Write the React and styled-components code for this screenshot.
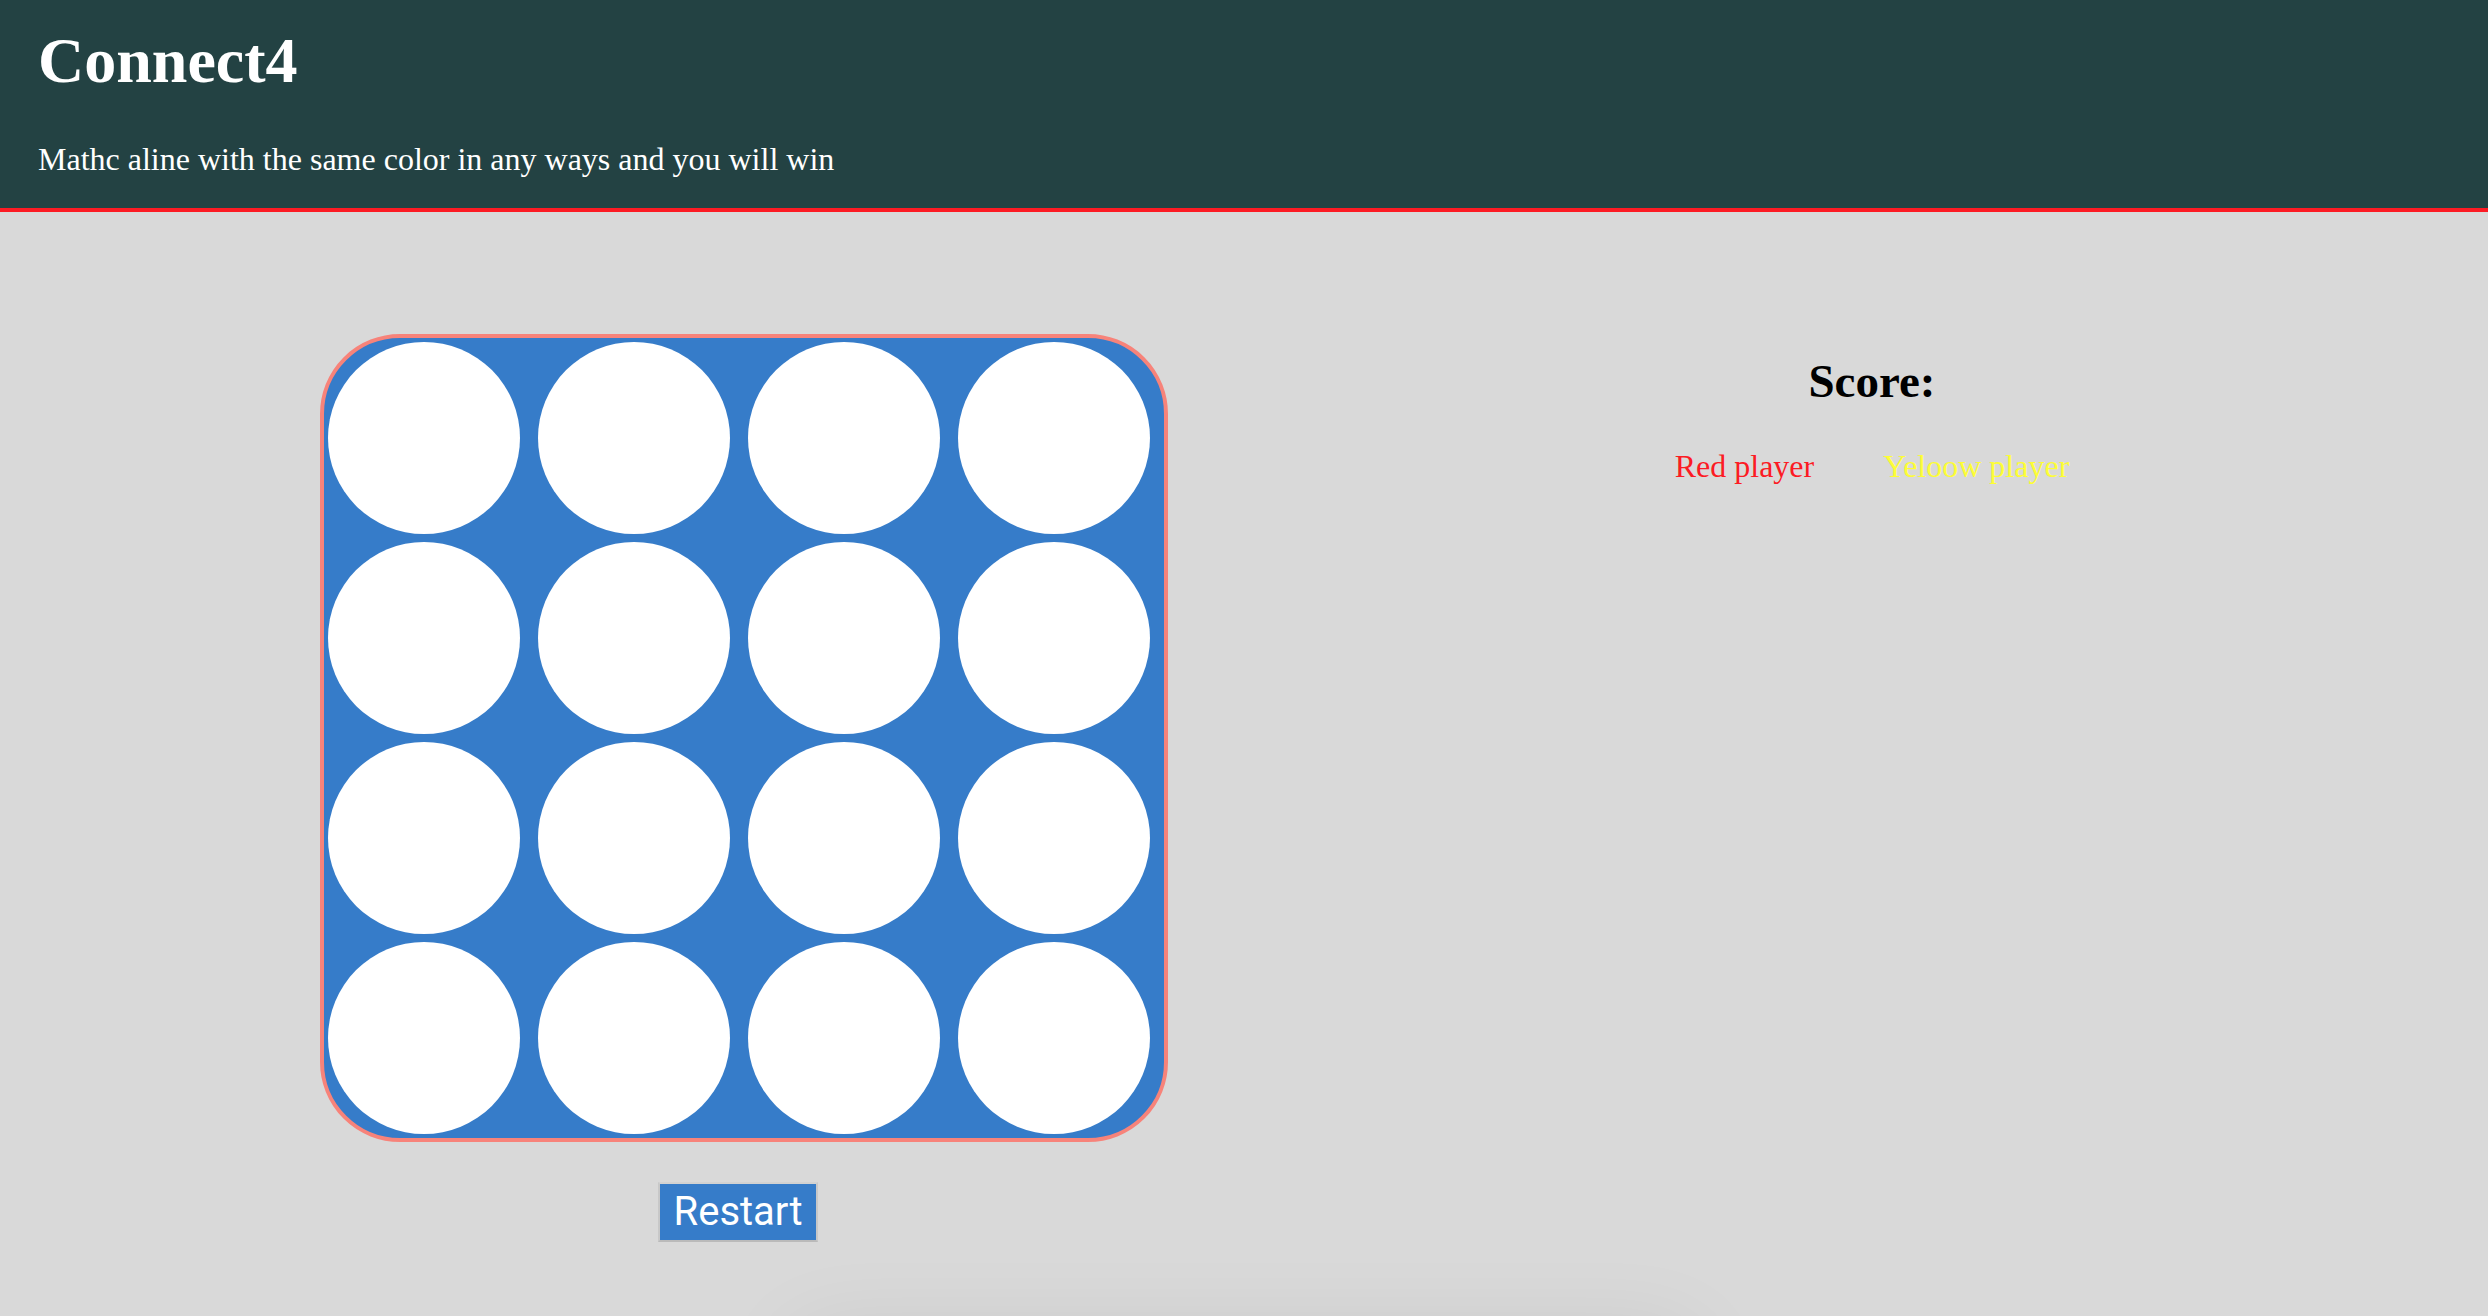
import React, { useState } from 'react';
import styled, { createGlobalStyle } from 'styled-components';

const GlobalStyle = createGlobalStyle`
    html, body {
        margin: 0;
        padding: 0;
        background: #d9d9d9;
        overflow: hidden;
    }
    body {
        font-family: "Liberation Serif", "Times New Roman", serif;
    }
`;

const SIZE = 4;
const emptyBoard = () => Array(SIZE * SIZE).fill(null);

const App = () => {
    const [cells, setCells] = useState(emptyBoard());
    const [turn, setTurn] = useState('red');

    // drop a piece in the clicked column
    const dropHandler = (index) => {
        const col = index % SIZE;
        for (let row = SIZE - 1; row >= 0; row--) {
            const i = row * SIZE + col;
            if (!cells[i]) {
                const next = [...cells];
                next[i] = turn;
                setCells(next);
                setTurn(turn === 'red' ? 'yellow' : 'red');
                return;
            }
        }
    };

    const restartHandler = () => {
        setCells(emptyBoard());
        setTurn('red');
    };

    return (
        <>
            <GlobalStyle />
            <Header>
                <Title>Connect4</Title>
                <Subtitle>Mathc aline with the same color in any ways and you will win</Subtitle>
            </Header>
            <Main>
                <GameColumn>
                    <Board>
                        {cells.map((cell, i) => (
                            <Slot key={i} $piece={cell} onClick={() => dropHandler(i)} />
                        ))}
                    </Board>
                    <RestartButton onClick={restartHandler}>Restart</RestartButton>
                </GameColumn>
                <ScorePanel>
                    <ScoreTitle>Score:</ScoreTitle>
                    <Players>
                        <Player $color="#fc1b24">Red player</Player>
                        <Player $color="#fdfd36">Yeloow player</Player>
                    </Players>
                </ScorePanel>
            </Main>
            <Message />
        </>
    );
};

const Header = styled.header`
    height: 179px;
    padding: 29px 38px 0;
    background: #234243;
    border-bottom: 4px solid #fc1b24;
    color: white;
`;

const Title = styled.h1`
    margin: 0;
    font-size: 64px;
    line-height: 64px;
    font-weight: bold;
`;

const Subtitle = styled.p`
    margin: 50px 0 0;
    font-size: 32px;
    line-height: 32px;
`;

const Main = styled.main`
    display: flex;
    align-items: flex-start;
    gap: 404px;
    padding: 122px 0 0 320px;
`;

const GameColumn = styled.div`
    display: flex;
    flex-direction: column;
    align-items: center;
`;

const Board = styled.div`
    display: grid;
    grid-template-columns: repeat(4, 192px);
    grid-auto-rows: 192px;
    column-gap: 18px;
    row-gap: 8px;
    padding: 4px 14px 4px 4px;
    background: #367cc9;
    border: 4px solid #f7837a;
    border-radius: 80px;
`;

const pieceColor = (piece) => {
    switch (piece) {
        case 'red':
            return '#fc1b24';
        case 'yellow':
            return '#fdfd36';
        default:
            return 'white';
    }
};

const Slot = styled.div`
    border-radius: 50%;
    background: ${(p) => pieceColor(p.$piece)};
    cursor: pointer;
`;

const RestartButton = styled.button`
    margin: 40px 12px 0 0;
    height: 60px;
    padding: 0 14px;
    background: #367cc9;
    color: white;
    font-family: Roboto, "Noto Sans", sans-serif;
    font-size: 40px;
    line-height: 56px;
    border: 2px solid;
    border-color: #d2d2d2 #c8c8c8 #bababa #c8c8c8;
    cursor: pointer;
`;

const ScorePanel = styled.section`
    width: 600px;
    text-align: center;
`;

const ScoreTitle = styled.h2`
    margin: 24px 0 0;
    font-size: 47px;
    line-height: 47px;
    font-weight: bold;
    color: black;
`;

const Players = styled.div`
    display: flex;
    justify-content: center;
    gap: 69px;
    margin-top: 45px;
`;

const Player = styled.span`
    font-size: 32px;
    line-height: 32px;
    color: ${(p) => p.$color};
`;

const Message = styled.div`
    width: 900px;
    height: 200px;
    margin: 90px auto 0;
    box-shadow: 0 0 90px rgba(0, 0, 0, 0.07);
`;

export default App;
